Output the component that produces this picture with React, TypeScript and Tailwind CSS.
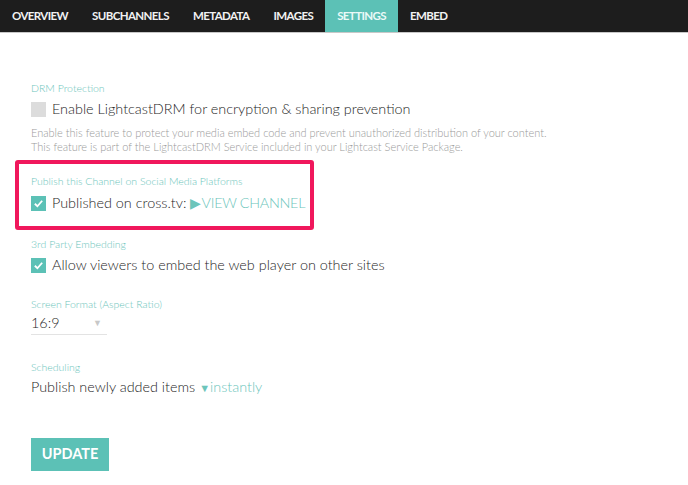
import React, { useState } from "react";

const tabs = ["OVERVIEW", "SUBCHANNELS", "METADATA", "IMAGES", "SETTINGS", "EMBED"];

const Check = ({ on }: { on: boolean }) => (
  <span
    className={`${
      on ? "bg-[#5cc1b6]" : "bg-[#dcdcdc]"
    } w-[15px] h-[15px] flex items-center justify-center shrink-0`}
  >
    {on && (
      <svg width="11" height="11" viewBox="0 0 12 12">
        <path d="M2 6.3 L4.8 9 L10 3" stroke="#fff" strokeWidth="2" fill="none" />
      </svg>
    )}
  </span>
);

const Label = ({ text }: { text: string }) => (
  <div className="text-[10.5px] text-[#6cc5bb] leading-[12px]">{text}</div>
);

const App = () => {
  const [active] = useState("SETTINGS");

  return (
    <div
      className="w-[688px] h-[485px] bg-white overflow-hidden text-[#262626]"
      style={{ fontFamily: "Lato, 'Liberation Sans', sans-serif" }}
    >
      {/* tabs */}
      <div className="h-[33px] bg-[#1d1d1d] border-b border-[#c8c8c8] flex">
        {tabs.map((t) => (
          <div
            key={t}
            className={`${
              t === active ? "bg-[#5cc1b6] text-[#eafaf8]" : "text-[#f2f2f2]"
            } h-[32px] px-[12px] flex items-center text-[11.5px] font-bold tracking-[-0.6px]`}
          >
            {t}
          </div>
        ))}
      </div>

      <div className="pl-[31px] pt-[49px] font-light">
        {/* DRM */}
        <Label text="DRM Protection" />
        <div className="flex items-center gap-[6px] mt-[3px] h-[24px]">
          <Check on={false} />
          <span className="text-[14.4px] whitespace-nowrap">
            Enable LightcastDRM for encryption &amp; sharing prevention
          </span>
        </div>
        <div className="text-[11px] leading-[14px] text-[#9a9a9a] mt-[5px] whitespace-nowrap">
          Enable this feature to protect your media embed code and prevent unauthorized distribution of your content.
          <br />
          This feature is part of the LightcastDRM Service included in your Lightcast Service Package.
        </div>

        {/* highlighted */}
        <div className="-ml-[16px] mt-[6px] w-[299px] h-[70px] border-[4px] border-[#f0175c] rounded-[3px] pl-[12px] pt-[11px]">
          <Label text="Publish this Channel on Social Media Platforms" />
          <div className="flex items-center gap-[6px] mt-[4px] h-[24px]">
            <Check on={true} />
            <span className="text-[14.4px] whitespace-nowrap">
              Published on cross.tv:{" "}
              <span className="text-[#6cc5bb] tracking-[-0.3px]">▶&#8202;VIEW CHANNEL</span>
            </span>
          </div>
        </div>

        {/* 3rd party */}
        <div className="mt-[8px]">
          <Label text="3rd Party Embedding" />
        </div>
        <div className="flex items-center gap-[6px] mt-[3px] h-[24px]">
          <Check on={true} />
          <span className="text-[14.4px] whitespace-nowrap">
            Allow viewers to embed the web player on other sites
          </span>
        </div>

        {/* format */}
        <div className="mt-[21px]">
          <Label text="Screen Format (Aspect Ratio)" />
        </div>
        <div className="w-[76px] h-[23px] mt-[2px] border-b border-[#e3e3e3] flex items-center justify-between pr-[5px]">
          <span className="text-[14.4px]">16:9</span>
          <span className="text-[9px] text-[#c8c8c8]">▼</span>
        </div>

        {/* scheduling */}
        <div className="mt-[26px]">
          <Label text="Scheduling" />
        </div>
        <div className="text-[14.4px] mt-[3px] whitespace-nowrap">
          Publish newly added items{" "}
          <span className="text-[#6cc5bb]">
            <span className="text-[11px]">▼</span>instantly
          </span>
        </div>

        <button className="mt-[40px] w-[78px] h-[33px] bg-[#5cc1b6] text-white font-bold text-[14.5px]">
          UPDATE
        </button>
      </div>
    </div>
  );
};

export default App;
